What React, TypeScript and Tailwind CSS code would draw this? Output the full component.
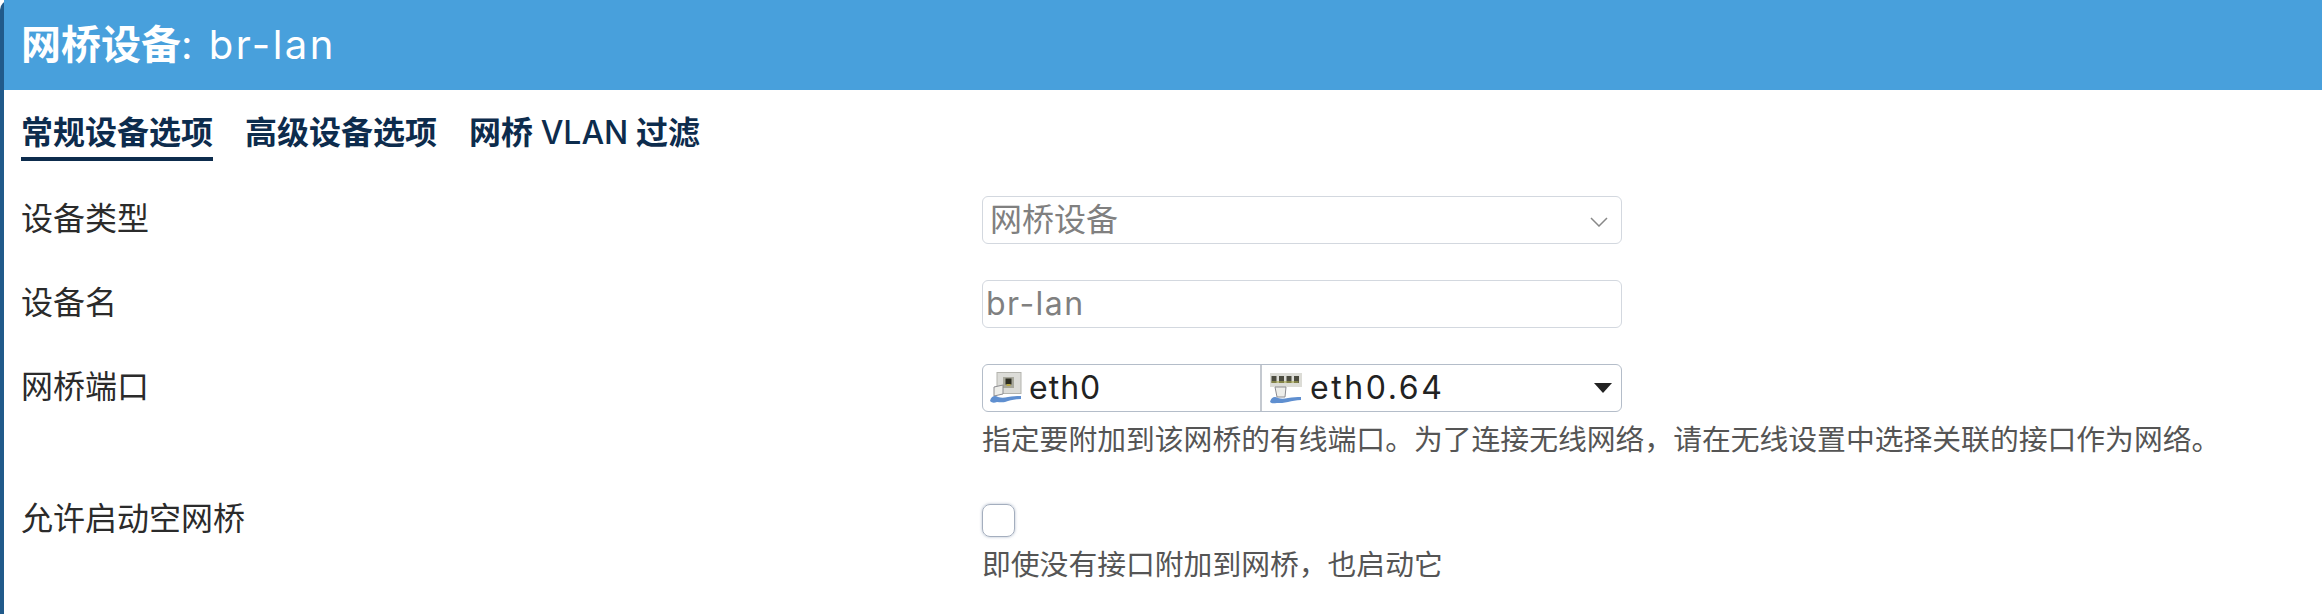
const font = "font-['Inter','Noto_Sans_CJK_SC',sans-serif]"

function PortIcon() {
  return (
    <svg width="32" height="32" viewBox="0 0 32 32" className="shrink-0 blur-[0.6px]">
      <rect x="7" y="0.5" width="24" height="21" fill="#dcdcd8" stroke="#b4b4ae" />
      <rect x="13" y="5" width="11" height="11" fill="#a8a89c" />
      <rect x="15.5" y="6.5" width="6" height="6" fill="#2c2c20" />
      <rect x="16.5" y="12" width="4" height="2" fill="#b8a848" />
      <path d="M4 15l9-2v9l-9 2z" fill="#eeeeea" stroke="#8c8c90" />
      <path d="M0 29c1-5 5-6 8-4 3 1 6 1 10 0 5-1 9-1 13-1v3c-5 0-9 1-13 2-4 2-8 1-11 1-3 1-5 1-7-1z" fill="#5f8fd0" />
    </svg>
  )
}

function SwitchIcon() {
  return (
    <svg width="32" height="32" viewBox="0 0 32 32" className="shrink-0 blur-[0.6px]">
      <rect x="0" y="1" width="32" height="14" fill="#dcdcd6" />
      <rect x="1.5" y="4" width="5" height="7" fill="#4c4c40" />
      <rect x="9" y="4" width="5" height="7" fill="#4c4c40" />
      <rect x="16.5" y="4" width="5" height="7" fill="#4c4c40" />
      <rect x="24" y="4" width="5" height="7" fill="#4c4c40" />
      <rect x="1.5" y="9" width="27" height="2" fill="#a8a850" opacity="0.6" />
      <path d="M5 15h11l-1 10H7z" fill="#eeeeea" stroke="#8c8c90" />
      <path d="M0 30c1-5 5-6 8-4 3 1 6 1 10 0 5-1 9-1 13-1v3c-5 0-9 1-13 2-4 1-8 1-11 1-3 0-5 1-7-1z" fill="#5f8fd0" />
    </svg>
  )
}

function Row({ label, help, children }: { label: string; help?: string; children: React.ReactNode }) {
  return (
    <div className="flex">
      <label className="w-[961px] shrink-0 text-[32px] leading-[46px] text-[#2b2b2b]">{label}</label>
      <div className="flex-1">
        {children}
        {help && <p className="mb-[2px] mt-[10px] text-[28.8px] leading-[36px] text-[#555]">{help}</p>}
      </div>
    </div>
  )
}

export default function App() {
  return (
    <div className={`h-[614px] w-[2322px] overflow-hidden bg-white ${font}`}>
      <div className="h-full rounded-tl-[10px] border-l-[4px] border-[#215a8a]">
        <h2 className="flex h-[90px] items-center bg-[#48a0dc] pl-[17px] text-[40px] text-white">
          <span className="font-bold">网桥设备</span>
          <span className="whitespace-pre tracking-[2.5px]">: br-lan</span>
        </h2>

        <div className="px-[17px]">
          <div className="flex h-[71px] items-start gap-[32px] pt-[21px] text-[32px] font-bold leading-[44px] text-[#0d2c4d]">
            <a className="h-[50px] border-b-[4px] border-[#0d2c4d]">常规设备选项</a>
            <a>高级设备选项</a>
            <a>
              网桥 <span className="font-medium">VLAN</span> 过滤
            </a>
          </div>

          <div className="mt-[35px] flex flex-col gap-[36px]">
            <Row label="设备类型">
              <div className="flex h-[48px] w-[640px] items-center justify-between rounded-[6px] border border-[#d3d8df] pl-[7px] pr-[13px] text-[32px] text-[#808080]">
                网桥设备
                <svg width="18" height="10" viewBox="0 0 18 10" className="mt-[3px]" fill="none" stroke="#888" strokeWidth="1.5">
                  <path d="M1 1l8 8 8-8" />
                </svg>
              </div>
            </Row>

            <Row label="设备名">
              <div className="flex h-[48px] w-[640px] items-center rounded-[6px] border border-[#d3d8df] pl-[3px] text-[32px] tracking-[1.5px] text-[#808080]">
                br-lan
              </div>
            </Row>

            <Row label="网桥端口" help="指定要附加到该网桥的有线端口。为了连接无线网络，请在无线设置中选择关联的接口作为网络。">
              <div className="flex h-[48px] w-[640px] items-center rounded-[6px] border border-[#b4bdc9] text-[32px] text-[#222]">
                <div className="flex h-full w-[279px] items-center gap-[7px] border-r-2 border-[#c4c9d0] pl-[7px] tracking-[1px]">
                  <PortIcon />
                  eth0
                </div>
                <div className="flex flex-1 items-center gap-[8px] pl-[8px] tracking-[2.6px]">
                  <SwitchIcon />
                  eth0.64
                </div>
                <div className="mr-[9px] h-0 w-0 border-x-[9px] border-t-[10px] border-x-transparent border-t-[#222]" />
              </div>
            </Row>

            <Row label="允许启动空网桥" help="即使没有接口附加到网桥，也启动它">
              <div className="mt-[8px] h-[33px] w-[33px] rounded-[8px] border border-[#a4aebe] shadow-[0_0_3px_rgba(110,130,160,0.55)]" />
            </Row>
          </div>
        </div>
      </div>
    </div>
  )
}
